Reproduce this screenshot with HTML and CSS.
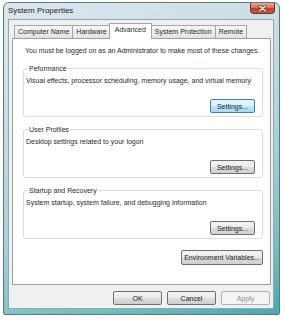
FILE: index.html
```html
<!DOCTYPE html>
<html lang="en">
<head>
    <meta charset="UTF-8">
    <meta name="viewport" content="width=device-width, initial-scale=1.0">
    <title>System Properties</title>
    <link rel="stylesheet" href="styles.css">
</head>
<body>
    <div class="window">
        <div class="titlebar">
            <span class="title">System Properties</span>
            <button class="close-btn" aria-label="Close">
                <svg width="9" height="7" viewBox="0 0 9 7">
                    <path d="M1.5 1 L7.5 6 M7.5 1 L1.5 6" stroke="#5a2018" stroke-width="2.6" stroke-linecap="round"/>
                    <path d="M1.5 1 L7.5 6 M7.5 1 L1.5 6" stroke="#ffffff" stroke-width="1.4" stroke-linecap="round"/>
                </svg>
            </button>
        </div>

        <div class="client">
            <div class="tabs">
                <div class="tab">Computer Name</div>
                <div class="tab">Hardware</div>
                <div class="tab active">Advanced</div>
                <div class="tab">System Protection</div>
                <div class="tab">Remote</div>
            </div>

            <div class="panel">
                <p class="note">You must be logged on as an Administrator to make most of these changes.</p>

                <fieldset class="group">
                    <legend>Peformance</legend>
                    <p class="desc">Visual effects, processor scheduling, memory usage, and virtual memory</p>
                    <div class="group-actions">
                        <button class="btn settings-btn focused">Settings...</button>
                    </div>
                </fieldset>

                <fieldset class="group">
                    <legend>User Profiles</legend>
                    <p class="desc">Desktop settings related to your logon</p>
                    <div class="group-actions">
                        <button class="btn settings-btn">Settings...</button>
                    </div>
                </fieldset>

                <fieldset class="group">
                    <legend>Startup and Recovery</legend>
                    <p class="desc">System startup, system failure, and debugging information</p>
                    <div class="group-actions">
                        <button class="btn settings-btn">Settings...</button>
                    </div>
                </fieldset>

                <div class="env-row">
                    <button class="btn env-btn">Environment Variables...</button>
                </div>
            </div>

            <div class="dialog-buttons">
                <button class="btn dlg-btn">OK</button>
                <button class="btn dlg-btn">Cancel</button>
                <button class="btn dlg-btn" disabled>Apply</button>
            </div>
        </div>
    </div>
</body>
</html>
```

FILE: styles.css
```css
body {
    margin: 0;
    background-color: #ffffff;
    font-family: 'Liberation Sans', Arial, sans-serif;
    font-size: 7px;
    color: #2a2a2a;
}

/* Aero window frame */
.window {
    width: 277px;
    height: 313px;
    margin: 2px 0 0 3px;
    box-sizing: border-box;
    border: 1px solid #557a84;
    border-radius: 6px 6px 2px 2px;
    padding: 0 5px 5px 4px;
    display: flex;
    flex-direction: column;
    background: linear-gradient(160deg, #dde7ed 0%, #c9dce4 30%, #a5d0d6 60%, #72bcbc 85%, #4ea6b2 100%);
}
.titlebar {
    height: 16px;
    display: flex;
    justify-content: space-between;
    align-items: flex-start;
}
.title {
    font-size: 8px;
    line-height: 16px;
    color: #1c1c1c;
}
.close-btn {
    width: 25px;
    height: 11px;
    margin-right: -1px;
    padding: 0;
    border: 1px solid #7a3024;
    border-top: none;
    border-radius: 0 0 4px 4px;
    background: linear-gradient(#e8ab9d 0%, #d8715c 45%, #c2402a 55%, #c9563b 100%);
    display: flex;
    align-items: center;
    justify-content: center;
}

/* Dialog body */
.client {
    flex-grow: 1;
    display: flex;
    flex-direction: column;
    background-color: #f0f0f0;
    border: 1px solid #8ea9b4;
    padding: 3px 2px 3px 3px;
}
.tabs {
    display: flex;
    align-items: flex-end;
    height: 16px;
    margin: 0 0 -1px 2px;
}
.tab {
    height: 12px;
    line-height: 12px;
    padding: 0 3px;
    margin-right: -1px;
    border: 1px solid #a0a6ab;
    background: linear-gradient(#f6f6f6, #e3e3e3);
    white-space: nowrap;
}
.tab.active {
    position: relative; /* sit above the panel border */
    z-index: 1;
    height: 15px;
    line-height: 12px;
    margin: 0 -1px 0 -1px;
    padding: 0 5px;
    border-bottom: none;
    background: #ffffff;
}
.panel {
    flex-grow: 1;
    background-color: #ffffff;
    border: 1px solid #9a9fa3;
    padding: 7px 7px 0 10px;
    display: flex;
    flex-direction: column;
}
.note {
    margin: 0 0 9px 2px;
    line-height: 9px;
}

/* Group boxes */
.group {
    margin: 0 0 8px 0;
    padding: 0 7px 3px 2px;
    border: 1px solid #d5dde2;
    border-radius: 3px;
}
.group legend {
    padding: 0 1px;
    margin-left: 2px;
    line-height: 9px;
}
.desc {
    margin: 3px 0 0 0;
    line-height: 9px;
}
.group-actions {
    display: flex;
    justify-content: flex-end;
    margin-top: 14px;
}

/* Vista style buttons */
.btn {
    font-family: 'Liberation Sans', Arial, sans-serif;
    font-size: 7px;
    color: #222;
    height: 14px;
    padding: 0;
    border: 1px solid #707070;
    border-radius: 2px;
    background: linear-gradient(#f3f3f3 0%, #ebebeb 48%, #dddddd 52%, #cfcfcf 100%);
}
.btn.focused {
    border-color: #3c7fb1;
    background: linear-gradient(#eaf6fd 0%, #d9f0fc 48%, #bee6fd 52%, #a7d9f5 100%);
}
.btn:disabled {
    border-color: #adb2b5;
    background: #f4f4f4;
    color: #8d8d8d;
}
.settings-btn {
    width: 45px;
}
.env-row {
    display: flex;
    justify-content: flex-end;
    margin-top: 3px;
}
.env-btn {
    width: 82px;
    height: 15px;
}
.dialog-buttons {
    display: flex;
    justify-content: flex-end;
    gap: 5px;
    margin-top: 6px;
    margin-right: 1px;
}
.dlg-btn {
    width: 49px;
}
```
